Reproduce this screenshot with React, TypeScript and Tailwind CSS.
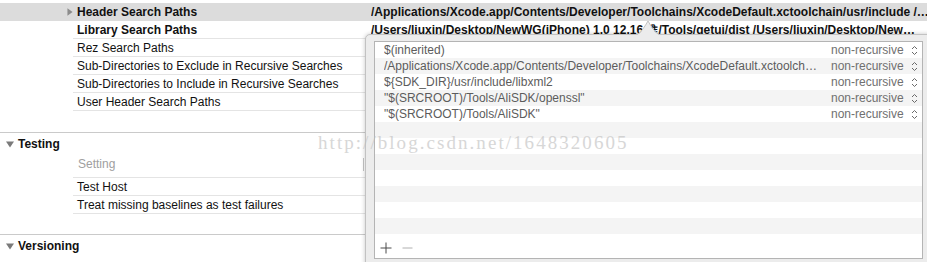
import React from "react";

const RightTri = () => (
  <svg width="7" height="10" viewBox="0 0 7 10" className="block">
    <path d="M0.5 0.5 L6.5 5 L0.5 9.5 Z" fill="#8c8c8c" />
  </svg>
);

const DownTri = () => (
  <svg width="8" height="7" viewBox="0 0 8 7" className="block">
    <path d="M0 0.5 L8 0.5 L4 6.5 Z" fill="#7a7a7a" />
  </svg>
);

const Stepper = () => (
  <svg width="7" height="11" viewBox="0 0 7 11" className="block">
    <path d="M1 4 L3.5 1.5 L6 4" fill="none" stroke="#6a6a6a" strokeWidth="1" />
    <path d="M1 7 L3.5 9.5 L6 7" fill="none" stroke="#6a6a6a" strokeWidth="1" />
  </svg>
);

type SettingRow = { name: string; bold?: boolean; value?: React.ReactNode; highlight?: boolean; tri?: boolean };

const searchRows: SettingRow[] = [
  {
    name: "Header Search Paths",
    bold: true,
    highlight: true,
    tri: true,
    value: "/Applications/Xcode.app/Contents/Developer/Toolchains/XcodeDefault.xctoolchain/usr/include /…",
  },
  {
    name: "Library Search Paths",
    bold: true,
    value: "/Users/liuxin/Desktop/NewWG(iPhone)  1.0  12.16 推/Tools/getui/dist /Users/liuxin/Desktop/New…",
  },
  { name: "Rez Search Paths" },
  { name: "Sub-Directories to Exclude in Recursive Searches" },
  { name: "Sub-Directories to Include in Recursive Searches" },
  { name: "User Header Search Paths" },
];

const listItems = [
  "$(inherited)",
  "/Applications/Xcode.app/Contents/Developer/Toolchains/XcodeDefault.xctoolch…",
  "${SDK_DIR}/usr/include/libxml2",
  "\"$(SRCROOT)/Tools/AliSDK/openssl\"",
  "\"$(SRCROOT)/Tools/AliSDK\"",
];

export default function App() {
  return (
    <div className="relative h-[262px] w-[927px] overflow-hidden bg-white font-['Liberation_Sans',Arial,sans-serif] text-[12px] leading-none text-[#111]">
      <div className="h-[3px]" />
      {searchRows.map((r, i) => (
        <div key={i} className={`flex h-[18px] ${r.highlight ? "bg-[#dcdcdc]" : ""}`}>
          <div className="flex w-[67px] shrink-0 items-center" />
          <div className="flex w-[6px] shrink-0 items-center">{r.tri ? <RightTri /> : null}</div>
          <div className={`flex min-w-0 flex-1 items-center ${r.highlight ? "" : "border-b border-[#e4e4e4]"}`}>
            <div className={`w-[298px] shrink-0 pl-[4px] ${r.bold ? "font-bold" : ""}`}>{r.name}</div>
            {r.value ? (
              <div className="min-w-0 overflow-hidden whitespace-nowrap font-bold leading-[16px]">{r.value}</div>
            ) : null}
          </div>
        </div>
      ))}
      <div className="h-[21px]" />
      <div className="border-t border-[#cacaca]" />
      <div className="flex h-[22px] items-center pl-[6px]">
        <DownTri />
        <span className="ml-[4px] font-bold">Testing</span>
      </div>
      <div className="ml-[73px] flex h-[23px] items-center border-b border-[#e4e4e4] pb-[4px]">
        <span className="w-[290px] pl-[5px] text-[#a0a0a0]">Setting</span>
        <div className="h-[13px] w-px bg-[#c4c4c4]" />
      </div>
      <div className="ml-[73px] flex h-[18px] items-center border-b border-[#e4e4e4] pl-[4px]">Test Host</div>
      <div className="ml-[73px] flex h-[18px] items-center border-b border-[#e4e4e4] pl-[4px]">
        Treat missing baselines as test failures
      </div>
      <div className="h-[20px]" />
      <div className="border-t border-[#cacaca]" />
      <div className="flex h-[22px] items-center pl-[6px]">
        <DownTri />
        <span className="ml-[4px] font-bold">Versioning</span>
      </div>

      {/* Popover */}
      <div className="absolute left-[365px] top-[34px] h-[240px] w-[600px] rounded-[5px] border border-[#c2c2c2] bg-[#ececec] pl-[8px] pt-[6px] shadow-[0_0_4px_rgba(0,0,0,0.22)]">
        <div className="flex h-[218px] w-[549px] flex-col border border-[#b4b4b4] bg-white">
          {Array.from({ length: 12 }).map((_, i) => (
            <div
              key={i}
              className={`flex h-[16px] shrink-0 items-center pl-[9px] pr-[4px] leading-[16px] ${i % 2 === 1 ? "bg-[#f4f4f4]" : "bg-white"}`}
            >
              {listItems[i] !== undefined ? (
                <>
                  <div className="w-[447px] shrink-0 overflow-hidden whitespace-nowrap text-[#5c5c5c]">{listItems[i]}</div>
                  <div className="w-[80px] shrink-0 whitespace-nowrap text-[#707070]">non-recursive</div>
                  <Stepper />
                </>
              ) : null}
            </div>
          ))}
          <div className="flex flex-1 items-center gap-[10px] pl-[5px] pt-[3px]">
            <svg width="12" height="12" viewBox="0 0 12 12" className="block">
              <path d="M6 0.5 V11.5 M0.5 6 H11.5" stroke="#4a4a4a" strokeWidth="1" />
            </svg>
            <svg width="11" height="12" viewBox="0 0 11 12" className="block">
              <path d="M0.5 6 H10.5" stroke="#b0b0b0" strokeWidth="1" />
            </svg>
          </div>
        </div>
      </div>

      {/* Popover arrow */}
      <svg width="22" height="15" viewBox="0 0 22 15" className="absolute left-[637px] top-[20px]">
        <path d="M0 15 C5 12 8 6 11 1 C14 6 17 12 22 15 Z" fill="#ececec" />
        <path d="M0 14.5 C5 11.5 8 6 11 1 C14 6 17 11.5 22 14.5" fill="none" stroke="#c2c2c2" strokeWidth="1" />
      </svg>

      {/* Watermark */}
      <div className="pointer-events-none absolute left-[318px] top-[133px] whitespace-nowrap font-['Liberation_Serif',serif] text-[19px] leading-none tracking-[2.05px] text-[#bdbdbd] opacity-60">
        http://blog.csdn.net/1648320605
      </div>
    </div>
  );
}
